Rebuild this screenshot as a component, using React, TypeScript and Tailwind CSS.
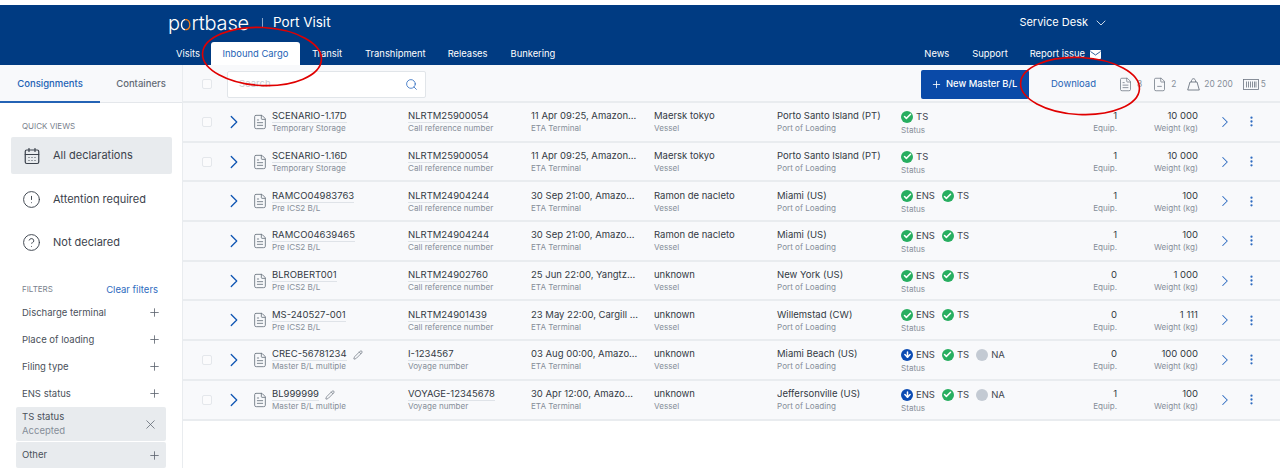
import React from "react";
import {
  CalendarDays,
  Check,
  ChevronDown,
  ChevronRight,
  CircleAlert,
  CircleHelp,
  EllipsisVertical,
  FileMinus,
  FileText,
  Pencil,
  Plus,
  Search,
  ArrowDown,
  X,
} from "lucide-react";

type Status = "ens" | "ensDown" | "ts" | "na";

interface Row {
  name: string;
  nameType: string;
  ref: string;
  refType: string;
  eta: string;
  vessel: string;
  port: string;
  status: Status[];
  equip: string;
  weight: string;
  checkbox: boolean;
  edit?: boolean;
}

const rows: Row[] = [
  { name: "SCENARIO-1.17D", nameType: "Temporary Storage", ref: "NLRTM25900054", refType: "Call reference number", eta: "11 Apr 09:25, Amazon...", vessel: "Maersk tokyo", port: "Porto Santo Island (PT)", status: ["ts"], equip: "1", weight: "10 000", checkbox: true },
  { name: "SCENARIO-1.16D", nameType: "Temporary Storage", ref: "NLRTM25900054", refType: "Call reference number", eta: "11 Apr 09:25, Amazon...", vessel: "Maersk tokyo", port: "Porto Santo Island (PT)", status: ["ts"], equip: "1", weight: "10 000", checkbox: true },
  { name: "RAMCO04983763", nameType: "Pre ICS2 B/L", ref: "NLRTM24904244", refType: "Call reference number", eta: "30 Sep 21:00, Amazo...", vessel: "Ramon de nacleto", port: "Miami (US)", status: ["ens", "ts"], equip: "1", weight: "100", checkbox: false },
  { name: "RAMCO04639465", nameType: "Pre ICS2 B/L", ref: "NLRTM24904244", refType: "Call reference number", eta: "30 Sep 21:00, Amazo...", vessel: "Ramon de nacleto", port: "Miami (US)", status: ["ens", "ts"], equip: "1", weight: "100", checkbox: false },
  { name: "BLROBERT001", nameType: "Pre ICS2 B/L", ref: "NLRTM24902760", refType: "Call reference number", eta: "25 Jun 22:00, Yangtz...", vessel: "unknown", port: "New York (US)", status: ["ens", "ts"], equip: "0", weight: "1 000", checkbox: false },
  { name: "MS-240527-001", nameType: "Pre ICS2 B/L", ref: "NLRTM24901439", refType: "Call reference number", eta: "23 May 22:00, Cargill ...", vessel: "unknown", port: "Willemstad (CW)", status: ["ens", "ts"], equip: "0", weight: "1 111", checkbox: false },
  { name: "CREC-56781234", nameType: "Master B/L multiple", ref: "I-1234567", refType: "Voyage number", eta: "03 Aug 00:00, Amazo...", vessel: "unknown", port: "Miami Beach (US)", status: ["ensDown", "ts", "na"], equip: "0", weight: "100 000", checkbox: true, edit: true },
  { name: "BL999999", nameType: "Master B/L multiple", ref: "VOYAGE-12345678", refType: "Voyage number", eta: "30 Apr 12:00, Amazo...", vessel: "unknown", port: "Jeffersonville (US)", status: ["ensDown", "ts", "na"], equip: "1", weight: "100", checkbox: true, edit: true },
];

const filters = ["Discharge terminal", "Place of loading", "Filing type", "ENS status"];

const StatusBadge = ({ kind }: { kind: Status }) => {
  const label = kind === "ts" ? "TS" : kind === "na" ? "NA" : "ENS";
  return (
    <span className="flex items-center gap-[3px]">
      {kind === "ts" || kind === "ens" ? (
        <span className="flex h-[12px] w-[12px] items-center justify-center rounded-full bg-[#27ae60]">
          <Check className="h-[9px] w-[9px] text-white" strokeWidth={4} />
        </span>
      ) : kind === "ensDown" ? (
        <span className="flex h-[12px] w-[12px] items-center justify-center rounded-full bg-[#0b4bb3]">
          <ArrowDown className="h-[9px] w-[9px] text-white" strokeWidth={4} />
        </span>
      ) : (
        <span className="h-[12px] w-[12px] rounded-full bg-[#c3cad3]" />
      )}
      <span className="text-[9.5px] leading-[12px] text-[#3f4650]">{label}</span>
    </span>
  );
};

const TableRow = ({ row }: { row: Row }) => (
  <div className="flex h-[39.7px] items-center border-b-2 border-[#e9ecef] bg-[#f8f9fb]">
    <div className="flex w-[43px] shrink-0 justify-start pl-[19px]">
      {row.checkbox && <span className="h-[10px] w-[10px] rounded-[2px] border border-[#e4e7eb] bg-[#fbfbfc]" />}
    </div>
    <ChevronRight className="-mx-[3px] h-[22px] w-[22px] shrink-0 text-[#0f56b3]" strokeWidth={1.4} />
    <FileText className="ml-[10px] h-[16px] w-[16px] shrink-0 text-[#6b7480]" strokeWidth={1.3} />
    <div className="ml-[4px] w-[136px] shrink-0 pt-[1px]">
      <div className="flex items-center gap-[6px]">
        <span className="border-b border-[#dfe3e8] text-[9.5px] leading-[12px] text-[#333a44]">{row.name}</span>
        {row.edit && <Pencil className="h-[10px] w-[10px] text-[#6f7782]" strokeWidth={1.8} />}
      </div>
      <div className="text-[8.1px] leading-[11px] text-[#868e99]">{row.nameType}</div>
    </div>
    <div className="w-[123px] shrink-0 pt-[1px]">
      <div className="w-fit border-b border-[#dfe3e8] text-[9.5px] leading-[12px] text-[#333a44]">{row.ref}</div>
      <div className="text-[8.1px] leading-[11px] text-[#868e99]">{row.refType}</div>
    </div>
    <div className="w-[123px] shrink-0 pt-[1px]">
      <div className="text-[9.5px] leading-[12px] text-[#333a44]">{row.eta}</div>
      <div className="mt-[1px] text-[8.1px] leading-[11px] text-[#868e99]">ETA Terminal</div>
    </div>
    <div className="w-[123px] shrink-0 pt-[1px]">
      <div className="text-[9.5px] leading-[12px] text-[#333a44]">{row.vessel}</div>
      <div className="mt-[1px] text-[8.1px] leading-[11px] text-[#868e99]">Vessel</div>
    </div>
    <div className="w-[124px] shrink-0 pt-[1px]">
      <div className="text-[9.5px] leading-[12px] text-[#333a44]">{row.port}</div>
      <div className="mt-[1px] text-[8.1px] leading-[11px] text-[#868e99]">Port of Loading</div>
    </div>
    <div className="w-[150px] shrink-0 pt-[3px]">
      <div className="flex items-center gap-[7px]">
        {row.status.map((s) => (
          <StatusBadge key={s} kind={s} />
        ))}
      </div>
      <div className="mt-[2px] text-[8.1px] leading-[11px] text-[#868e99]">Status</div>
    </div>
    <div className="w-[66px] shrink-0 pt-[1px] text-right">
      <div className="text-[9.5px] leading-[12px] text-[#333a44]">{row.equip}</div>
      <div className="mt-[1px] text-[8.1px] leading-[11px] text-[#868e99]">Equip.</div>
    </div>
    <div className="w-[81px] shrink-0 pt-[1px] text-right">
      <div className="text-[9.5px] leading-[12px] text-[#333a44]">{row.weight}</div>
      <div className="mt-[1px] text-[8.1px] leading-[11px] text-[#868e99]">Weight (kg)</div>
    </div>
    <ChevronRight className="ml-[18px] h-[18px] w-[18px] shrink-0 text-[#2e6bc0]" strokeWidth={1.4} />
    <EllipsisVertical className="ml-[11px] h-[13px] w-[13px] shrink-0 text-[#2e6bc0]" strokeWidth={2.2} />
  </div>
);

export default function App() {
  return (
    <div className="relative h-[476px] w-[1280px] overflow-hidden bg-white font-['Inter',sans-serif]">
      <div className="mt-[5px] h-[60px] bg-[#003b82] text-white">
        <div className="flex h-[35px] items-center pl-[168px]">
          <span className="w-[80px] whitespace-nowrap text-[20px] font-light leading-none tracking-[-0.2px]">
            p<span className="bg-[linear-gradient(90deg,#ffffff_45%,#f07d1a_45%)] bg-clip-text text-transparent">o</span>rtbase
          </span>
          <span className="ml-[14px] h-[10px] w-px bg-[#8aa6c9]" />
          <span className="ml-[10px] text-[13.5px]">Port Visit</span>
          <span className="ml-auto flex items-center gap-[5px] pr-[171px] text-[11px]">
            Service Desk <ChevronDown className="h-[16px] w-[16px]" strokeWidth={1.2} />
          </span>
        </div>
        <div className="flex h-[25px] items-end pl-[176px] text-[9.4px]">
          <span className="flex h-[23px] items-center pt-[1px]">Visits</span>
          <span className="ml-[11px] flex h-[23px] w-[89px] items-center justify-center rounded-t-[3px] bg-white pt-[1px] text-[#2463b5]">Inbound Cargo</span>
          <span className="ml-[12px] flex h-[23px] items-center pt-[1px]">Transit</span>
          <span className="ml-[23px] flex h-[23px] items-center pt-[1px]">Transhipment</span>
          <span className="ml-[22px] flex h-[23px] items-center pt-[1px]">Releases</span>
          <span className="ml-[23px] flex h-[23px] items-center pt-[1px]">Bunkering</span>
          <span className="ml-auto flex h-[23px] items-center pr-[179px] pt-[1px]">
            <span>News</span>
            <span className="ml-[23px]">Support</span>
            <span className="ml-[22px]">Report issue</span>
            <svg className="ml-[5px] h-[9px] w-[11px]" viewBox="0 0 11 9">
              <rect width="11" height="9" rx="1" fill="#ffffff" />
              <path d="M0.5 1.5 L5.5 5 L10.5 1.5" fill="none" stroke="#003b82" strokeWidth="0.8" />
            </svg>
          </span>
        </div>
      </div>

      <div className="flex">
        <aside className="w-[183px] shrink-0 border-r border-[#e9ecef]">
          <div className="flex h-[38px] border-b border-[#e4e7eb] bg-[#f8f9fb] text-[9.5px] font-medium">
            <div className="-mb-px flex w-[100px] items-center justify-center border-b-2 border-[#2463b5] pt-[2px] text-[#2463b5]">Consignments</div>
            <div className="flex flex-1 items-center justify-center pt-[2px] text-[#626a75]">Containers</div>
          </div>
          <div className="pl-[11px] pt-[18px]">
            <div className="pl-[11px] text-[8px] leading-[11px] text-[#7a828d]">QUICK VIEWS</div>
            <div className="mt-[5px] flex h-[37px] w-[161px] items-center rounded-[2px] bg-[#e8ebee] pl-[12px] text-[#3b424c]">
              <CalendarDays className="h-[18px] w-[18px]" strokeWidth={1.6} />
              <span className="ml-[12px] text-[11px]">All declarations</span>
            </div>
            <div className="mt-[4px] flex h-[43px] w-[161px] items-center pl-[11px] text-[#3b424c]">
              <CircleAlert className="h-[19px] w-[19px]" strokeWidth={1.2} />
              <span className="ml-[12px] text-[11px]">Attention required</span>
            </div>
            <div className="flex h-[43px] w-[161px] items-center pl-[11px] text-[#3b424c]">
              <CircleHelp className="h-[19px] w-[19px]" strokeWidth={1.2} />
              <span className="ml-[12px] text-[11px]">Not declared</span>
            </div>
            <div className="mt-[19px] flex items-end justify-between pl-[11px] pr-[24px]">
              <span className="text-[8px] leading-[11px] text-[#7a828d]">FILTERS</span>
              <span className="-mb-[2px] text-[9.5px] text-[#2e6bc0]">Clear filters</span>
            </div>
            <div className="mt-[4px]">
              {filters.map((f) => (
                <div key={f} className="flex h-[27px] items-center justify-between pl-[11px] pr-[21px] text-[9.5px] text-[#4a515b]">
                  <span>{f}</span>
                  <Plus className="h-[13px] w-[13px] text-[#5b636e]" strokeWidth={1.5} />
                </div>
              ))}
              <div className="ml-[5px] flex h-[34px] w-[150px] items-center justify-between rounded-[2px] bg-[#e8ebee] pl-[6px] pr-[8px]">
                <div className="text-[9.5px] leading-[14px] text-[#4a515b]">
                  <div>TS status</div>
                  <div className="text-[#868e99]">Accepted</div>
                </div>
                <X className="h-[15px] w-[15px] text-[#5b636e]" strokeWidth={1.2} />
              </div>
              <div className="ml-[5px] mt-[1px] flex h-[26px] w-[150px] items-center justify-between rounded-[2px] bg-[#e8ebee] pl-[6px] pr-[5px] text-[9.5px] text-[#4a515b]">
                <span>Other</span>
                <Plus className="h-[13px] w-[13px] text-[#5b636e]" strokeWidth={1.5} />
              </div>
            </div>
          </div>
        </aside>

        <main className="min-w-0 flex-1">
          <div className="flex h-[38px] items-center border-b-2 border-[#e9ecef] bg-[#f8f9fb] pt-[2px]">
            <span className="ml-[19px] h-[10px] w-[10px] rounded-[2px] border border-[#e4e7eb] bg-[#fbfbfc]" />
            <div className="ml-[15px] flex h-[27px] w-[199px] items-center justify-between rounded-[2px] border border-[#e1e5e9] bg-white pl-[11px] pr-[7px]">
              <span className="text-[9.5px] text-[#c8cdd3]">Search</span>
              <Search className="h-[13px] w-[13px] text-[#2e6bc0]" strokeWidth={1.5} />
            </div>
            <button type="button" className="ml-[495px] flex h-[29px] w-[108px] items-center rounded-[2px] bg-[#0a4aa8] pl-[10px] text-[9.4px] font-medium text-white">
              <Plus className="mr-[4px] h-[11px] w-[11px]" strokeWidth={1.8} />
              New Master B/L
            </button>
            <span className="ml-[22px] text-[9.5px] text-[#2463b5]">Download</span>
            <span className="ml-[22px] flex items-center text-[8.4px] text-[#868e99]">
              <FileText className="h-[15px] w-[15px] text-[#6b7480]" strokeWidth={1.2} />
              <span className="ml-[4px]">8</span>
              <FileMinus className="ml-[10px] h-[15px] w-[15px] text-[#6b7480]" strokeWidth={1.2} />
              <span className="ml-[4px]">2</span>
              <svg className="ml-[11px] h-[14px] w-[13px] text-[#6b7480]" viewBox="0 0 13 14" fill="none" stroke="currentColor" strokeWidth="0.9">
                <path d="M0.7 13 L3 5 H10 L12.3 13 Z" />
                <path d="M4.3 5 C4.3 0.6 8.7 0.6 8.7 5" />
              </svg>
              <span className="ml-[4px]">20 200</span>
              <svg className="ml-[10px] h-[11px] w-[16px] text-[#6b7480]" viewBox="0 0 16 11" fill="none" stroke="currentColor" strokeWidth="0.8">
                <rect x="0.5" y="0.5" width="15" height="10" />
                <path d="M3.5 2.5v6M5.5 2.5v6M7.5 2.5v6M9.5 2.5v6M11.5 2.5v6M13 2.5v6" />
              </svg>
              <span className="ml-[2px]">5</span>
            </span>
          </div>
          {rows.map((row) => (
            <TableRow key={row.name} row={row} />
          ))}
        </main>
      </div>

      <svg className="pointer-events-none absolute left-0 top-0 h-[476px] w-[1280px]" viewBox="0 0 1280 476" fill="none" stroke="#e00000" strokeWidth="1.6">
        <ellipse cx="262" cy="56.5" rx="59.5" ry="29" transform="rotate(3 262 56.5)" />
        <ellipse cx="1080" cy="86" rx="59.5" ry="28.5" transform="rotate(3 1080 86)" />
      </svg>
    </div>
  );
}
